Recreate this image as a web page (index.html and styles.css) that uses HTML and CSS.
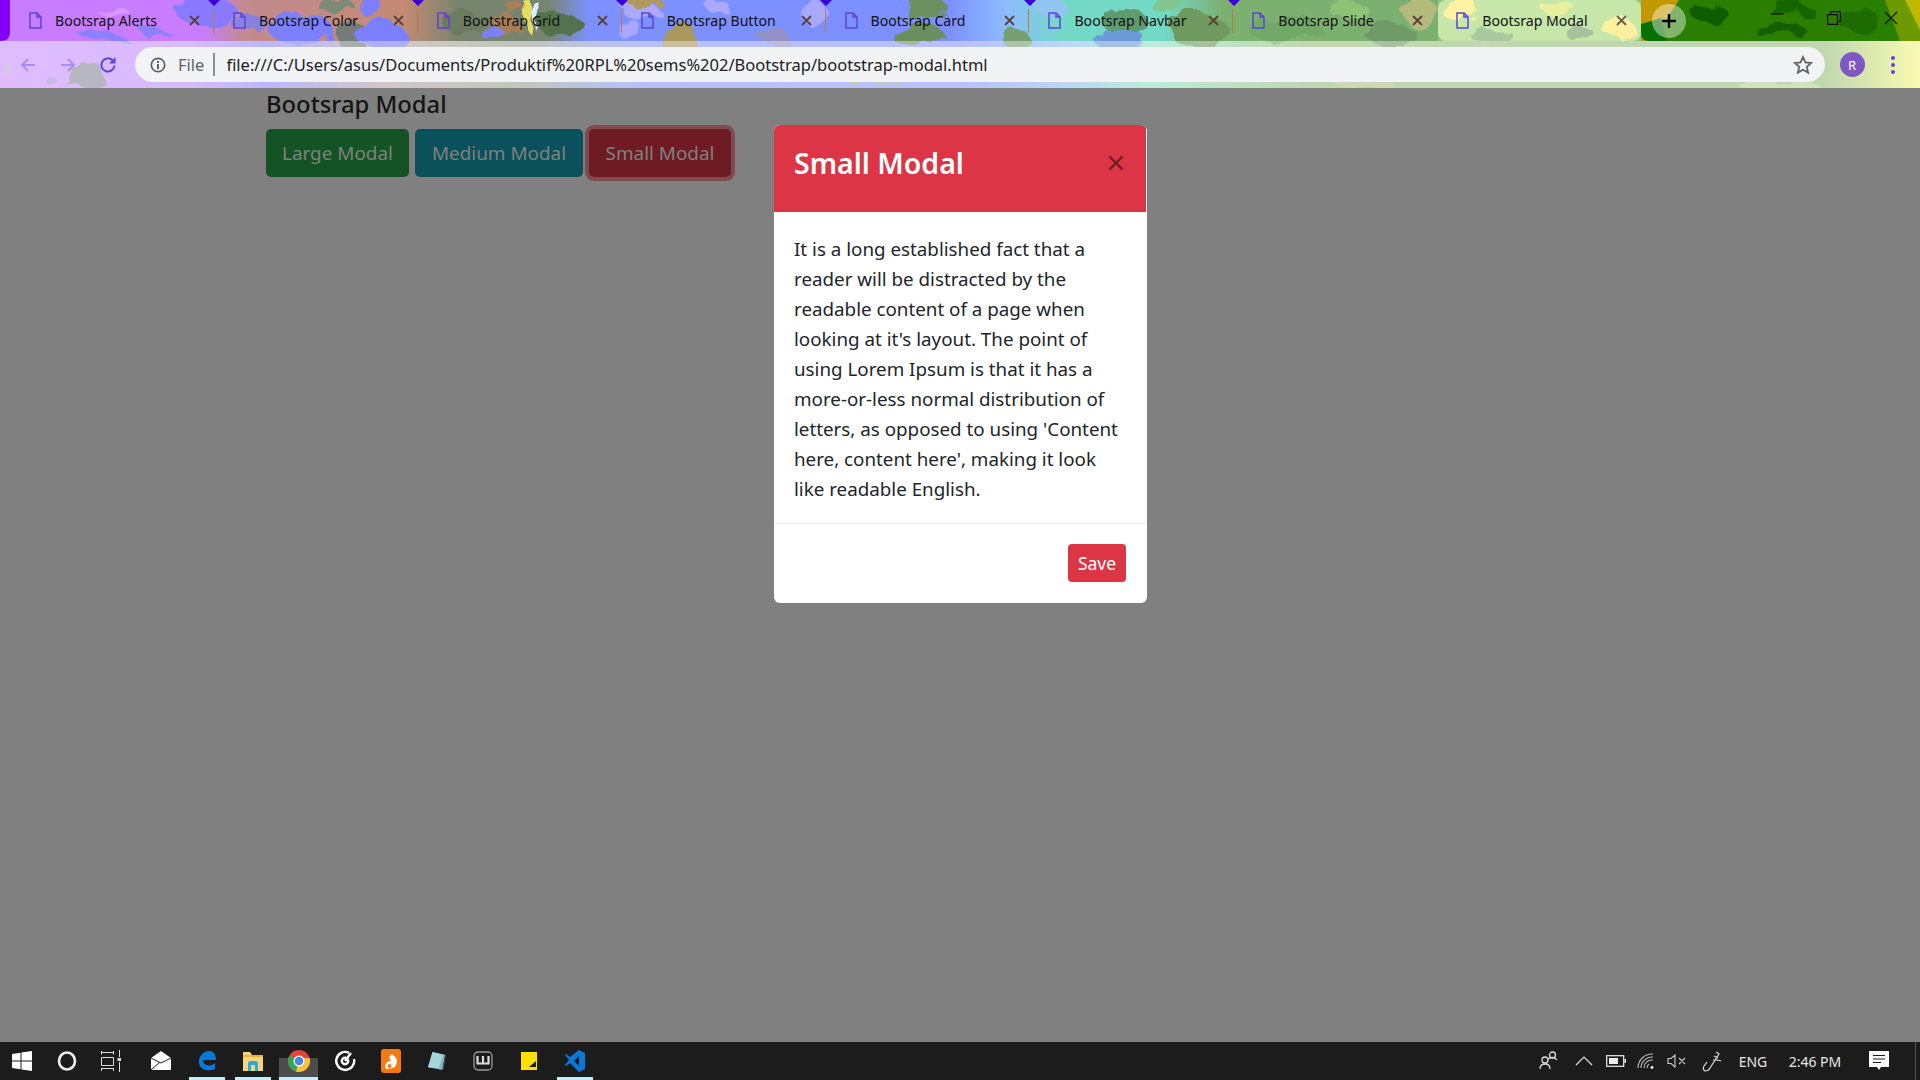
FILE: index.html
```html
<!DOCTYPE html>
<html lang="en">
<head>
<meta charset="utf-8">
<title>Bootstrap Modal</title>
<link rel="stylesheet" href="styles.css">
</head>
<body>
<svg width="0" height="0" class="defs">
  <symbol id="doc" viewBox="0 0 13 17"><path d="M1 1h7l4 4v11H1z M8 1v4h4" fill="none" stroke="#5b44d6" stroke-width="1.500"/></symbol>
  <symbol id="x" viewBox="0 0 11 11"><path d="M1 1l9 9M10 1l-9 9" fill="none" stroke="currentColor" stroke-width="1.800"/></symbol>
</svg>
<header class="chrome">
  <svg class="wallpaper" viewBox="0 0 1920 88" preserveAspectRatio="none">
    <defs>
      <linearGradient id="topband" x1="0" x2="1438" y1="0" y2="0" gradientUnits="userSpaceOnUse">
        <stop offset="0" stop-color="#c87cff"/>
        <stop offset=".14" stop-color="#c87cff"/>
        <stop offset=".17" stop-color="#c38a90"/>
        <stop offset=".28" stop-color="#c48a74"/>
        <stop offset=".32" stop-color="#77846e"/>
        <stop offset=".38" stop-color="#77846e"/>
        <stop offset=".41" stop-color="#7c90ff"/>
        <stop offset=".66" stop-color="#7c90ff"/>
        <stop offset=".70" stop-color="#8ebcff"/>
        <stop offset=".74" stop-color="#74d8c6"/>
        <stop offset=".81" stop-color="#74d8c6"/>
        <stop offset=".85" stop-color="#7cb070"/>
        <stop offset="1" stop-color="#7cb070"/>
      </linearGradient>
      <linearGradient id="lowband" x1="0" x2="1920" y1="0" y2="0" gradientUnits="userSpaceOnUse">
        <stop offset="0" stop-color="#cd93ff"/>
        <stop offset=".10" stop-color="#c090ff"/>
        <stop offset=".14" stop-color="#8f8cff"/>
        <stop offset=".20" stop-color="#b8a4a8"/>
        <stop offset=".27" stop-color="#9aa590"/>
        <stop offset=".33" stop-color="#8c9aff"/>
        <stop offset=".50" stop-color="#8e9aff"/>
        <stop offset=".56" stop-color="#8cc4f0"/>
        <stop offset=".60" stop-color="#8ce4c2"/>
        <stop offset=".68" stop-color="#99c07f"/>
        <stop offset=".95" stop-color="#99c07f"/>
        <stop offset="1" stop-color="#f6f880"/>
      </linearGradient>
      <filter id="rough" x="0" y="0" width="1920" height="88" filterUnits="userSpaceOnUse">
        <feTurbulence type="fractalNoise" baseFrequency=".035" numOctaves="3" seed="7"/>
        <feDisplacementMap in="SourceGraphic" scale="22"/>
      </filter>
    </defs>
    <rect width="1920" height="88" fill="url(#lowband)"/>
    <rect width="1438" height="41" fill="url(#topband)"/>
    <g filter="url(#rough)">
      <path d="M75 33q30-8 55 8H110q-20-2-35-8zM130 20q30 10 50 21h-30z" fill="#8d80ff"/>
      <ellipse cx="205" cy="10" rx="30" ry="14" fill="#8a7aff"/>
      <ellipse cx="110" cy="8" rx="16" ry="4" fill="#d898ff"/>
      <path d="M70 88l8-18q14-8 24-2l8 20z" fill="#8b8b9b"/>
      <ellipse cx="50" cy="80" rx="6" ry="4" fill="#a78fd8"/>
      <ellipse cx="8" cy="70" rx="5" ry="8" fill="#b8a8d8"/>
      <ellipse cx="300" cy="28" rx="32" ry="16" fill="#7c80ff"/>
      <ellipse cx="248" cy="22" rx="18" ry="10" fill="#8a80e0"/>
      <ellipse cx="335" cy="5" rx="18" ry="7" fill="#7c8a78"/>
      <ellipse cx="352" cy="36" rx="18" ry="14" fill="#737c78"/>
      <ellipse cx="380" cy="34" rx="26" ry="12" fill="#7c80ff"/>
      <ellipse cx="370" cy="6" rx="12" ry="10" fill="#7c80ff"/>
      <ellipse cx="465" cy="22" rx="24" ry="12" fill="#6c7c60"/>
      <path d="M490 18l20-6 12 18-16 10zM505 4l14-4 6 8-12 6z" fill="#a97e56"/>
      <path d="M524 2l6-2 6 16-4 20-6-8z" fill="#e6dd5c"/>
      <path d="M534 4l5-2 4 18-6 12z" fill="#d8f0ff"/>
      <ellipse cx="562" cy="26" rx="22" ry="12" fill="#52724e"/>
      <ellipse cx="495" cy="36" rx="12" ry="6" fill="#7c80ff"/>
      <ellipse cx="640" cy="10" rx="18" ry="9" fill="#aca8ff"/>
      <ellipse cx="630" cy="30" rx="12" ry="10" fill="#a8a6ff"/>
      <ellipse cx="640" cy="0" rx="20" ry="5" fill="#b09a60"/>
      <ellipse cx="678" cy="38" rx="18" ry="18" fill="#a89860"/>
      <ellipse cx="715" cy="4" rx="12" ry="5" fill="#aaa8ff"/>
      <ellipse cx="775" cy="38" rx="14" ry="10" fill="#9490c8"/>
      <ellipse cx="815" cy="14" rx="10" ry="14" fill="#a8a8ff"/>
      <ellipse cx="925" cy="8" rx="22" ry="12" fill="#6c9060"/>
      <ellipse cx="918" cy="36" rx="26" ry="12" fill="#6c8f60"/>
      <ellipse cx="1015" cy="38" rx="14" ry="10" fill="#76a070"/>
      <ellipse cx="1048" cy="5" rx="16" ry="8" fill="#92c4f0"/>
      <ellipse cx="1125" cy="22" rx="22" ry="14" fill="#5f9a70"/>
      <ellipse cx="1120" cy="40" rx="26" ry="10" fill="#6c9ad8"/>
      <ellipse cx="1200" cy="32" rx="30" ry="16" fill="#6e9a5e"/>
      <ellipse cx="1170" cy="4" rx="20" ry="8" fill="#80c890"/>
      <ellipse cx="1285" cy="30" rx="36" ry="14" fill="#72a868"/>
      <ellipse cx="1390" cy="34" rx="26" ry="10" fill="#6f9a68"/>
      <ellipse cx="1420" cy="12" rx="16" ry="16" fill="#b4ba7c"/>
      <ellipse cx="1345" cy="6" rx="20" ry="8" fill="#8ec274"/>
      <ellipse cx="620" cy="78" rx="22" ry="6" fill="#a0a8b0"/>
      <ellipse cx="870" cy="78" rx="24" ry="8" fill="#a0aa90"/>
      <ellipse cx="1360" cy="80" rx="34" ry="8" fill="#b4c080"/>
      <ellipse cx="1780" cy="86" rx="40" ry="6" fill="#b4d48c"/>
    </g>
    <rect x="1438" width="203" height="41" rx="8" fill="#c6e6aa"/>
    <g filter="url(#rough)">
      <ellipse cx="1460" cy="10" rx="18" ry="12" fill="#fff2a0"/>
      <ellipse cx="1490" cy="34" rx="22" ry="6" fill="#a8c8a0"/>
      <ellipse cx="1560" cy="10" rx="16" ry="8" fill="#e8f0a0"/>
      <ellipse cx="1618" cy="28" rx="16" ry="10" fill="#fff0a0"/>
      <ellipse cx="1580" cy="34" rx="14" ry="7" fill="#a8c0a0"/>
    </g>
    <path d="M0 0H10V32q0 9-9 9H0z" fill="#8400fb"/>
    <path d="M1641 0H1920V41H1651q-10 0-10-10z" fill="#2a7e00"/>
    <path d="M1641 0h38l-12 18-18 23h-8z" fill="#c29800"/>
    <path d="M1641 24l20-6 6 23h-18q-8 0-8-8z" fill="#087000"/>
    <g filter="url(#rough)">
      <ellipse cx="1710" cy="14" rx="18" ry="10" fill="#0c5c00"/>
      <ellipse cx="1780" cy="30" rx="26" ry="7" fill="#125e00"/>
      <ellipse cx="1790" cy="8" rx="22" ry="6" fill="#146600"/>
      <ellipse cx="1860" cy="22" rx="22" ry="10" fill="#1c6c00"/>
    </g>
    <path d="M1885 0h35v41h-20z" fill="#6c9a00"/>
    <path d="M1905 0h15v30z" fill="#c0b800"/>
    <path d="M208 0h12l-6 6zM412 0h12l-6 6zM616 0h12l-6 6zM820 0h12l-6 6zM1024 0h12l-6 6zM1228 0h12l-6 6z" fill="#3a00d8"/>
  </svg>
  <div class="tabstrip">
    <div class="tab"><svg class="tab-doc"><use href="#doc"/></svg><span class="tab-title">Bootsrap Alerts</span><svg class="tab-x"><use href="#x"/></svg></div>
    <div class="tab"><svg class="tab-doc"><use href="#doc"/></svg><span class="tab-title">Bootsrap Color</span><svg class="tab-x"><use href="#x"/></svg></div>
    <div class="tab"><svg class="tab-doc"><use href="#doc"/></svg><span class="tab-title">Bootstrap Grid</span><svg class="tab-x"><use href="#x"/></svg></div>
    <div class="tab"><svg class="tab-doc"><use href="#doc"/></svg><span class="tab-title">Bootsrap Button</span><svg class="tab-x"><use href="#x"/></svg></div>
    <div class="tab"><svg class="tab-doc"><use href="#doc"/></svg><span class="tab-title">Bootsrap Card</span><svg class="tab-x"><use href="#x"/></svg></div>
    <div class="tab"><svg class="tab-doc"><use href="#doc"/></svg><span class="tab-title">Bootsrap Navbar</span><svg class="tab-x"><use href="#x"/></svg></div>
    <div class="tab tab-plain"><svg class="tab-doc"><use href="#doc"/></svg><span class="tab-title">Bootsrap Slide</span><svg class="tab-x"><use href="#x"/></svg></div>
    <div class="tab tab-plain"><svg class="tab-doc"><use href="#doc"/></svg><span class="tab-title">Bootsrap Modal</span><svg class="tab-x tab-x-active"><use href="#x"/></svg></div>
    <div class="newtab"><svg width="16" height="16" viewBox="0 0 16 16"><path d="M8 1v14M1 8h14" stroke="#000" stroke-width="2.400"/></svg></div>
    <div class="winctl">
      <div class="winbtn"><svg width="14" height="14" viewBox="0 0 14 14"><path d="M0 3h13" stroke="#111" stroke-width="1.200"/></svg></div>
      <div class="winbtn"><svg width="14" height="14" viewBox="0 0 14 14"><path d="M.6 3.600h9.800v9.800H.6zM3.600 3.400V.6h9.800v9.800h-2.800" fill="none" stroke="#111" stroke-width="1.200"/></svg></div>
      <div class="winbtn"><svg width="14" height="14" viewBox="0 0 14 14"><path d="M1 1l12 12M13 1L1 13" stroke="#111" stroke-width="1.200"/></svg></div>
    </div>
  </div>
  <div class="toolbar">
    <div class="navbtn nav-off"><svg width="18" height="18" viewBox="0 0 18 18"><path d="M16 9H3M9 3L3 9l6 6" fill="none" stroke="currentColor" stroke-width="1.800"/></svg></div>
    <div class="navbtn nav-off"><svg width="18" height="18" viewBox="0 0 18 18"><path d="M2 9h13M9 3l6 6-6 6" fill="none" stroke="currentColor" stroke-width="1.800"/></svg></div>
    <div class="navbtn"><svg width="18" height="18" viewBox="0 0 18 18"><path d="M15.500 9.500a6.600 6.600 0 1 1-1.900-5.200" fill="none" stroke="currentColor" stroke-width="2"/><path d="M16.500 1v6.500h-6.500z" fill="currentColor"/></svg></div>
    <div class="omnibox">
      <svg class="info" width="16" height="16" viewBox="0 0 16 16"><circle cx="8" cy="8" r="6.700" fill="none" stroke="#5f6368" stroke-width="1.700"/><path d="M7 7h2v5H7zM7 4h2v2H7z" fill="#5f6368"/></svg>
      <span class="scheme">File</span>
      <span class="url">file:///C:/Users/asus/Documents/Produktif%20RPL%20sems%202/Bootstrap/bootstrap-modal.html</span>
      <svg class="star" width="20" height="20" viewBox="0 0 20 20"><path d="M10 2l2.400 5.400 5.800.6-4.400 3.900 1.300 5.700L10 14.700l-5.100 2.900 1.300-5.700L1.800 8l5.800-.6z" fill="none" stroke="#5f6368" stroke-width="1.800"/></svg>
    </div>
    <div class="avatar-slot"><span class="avatar">R</span></div>
    <div class="menu-slot"><span class="dots"><i></i><i></i><i></i></span></div>
  </div>
</header>

<main class="page">
  <h5 class="page-title">Bootsrap Modal</h5>
  <div class="btn-row">
    <button class="btn btn-green">Large Modal</button>
    <button class="btn btn-teal">Medium Modal</button>
    <button class="btn btn-red">Small Modal</button>
  </div>
  <section class="modal">
    <div class="modal-head">
      <h4 class="modal-title">Small Modal</h4>
      <svg class="modal-x" width="16" height="16" viewBox="0 0 16 16"><path d="M1.500 1.500l13 13M14.500 1.500l-13 13" stroke="#6e1c25" stroke-width="2.300"/></svg>
    </div>
    <div class="modal-body">It is a long established fact that a reader will be distracted by the readable content of a page when looking at it's layout. The point of using Lorem Ipsum is that it has a more-or-less normal distribution of letters, as opposed to using 'Content here, content here', making it look like readable English.</div>
    <div class="modal-foot"><button class="btn-save">Save</button></div>
  </section>
</main>

<footer class="taskbar">
  <div class="sys-icons">
    <div class="tb-sys"><svg width="20" height="20" viewBox="0 0 20 20"><path d="M0 3l8.500-1.200V9.500H0zM9.500 1.600L20 0v9.500H9.500zM0 10.500h8.500v7.700L0 17zM9.500 10.500H20V20L9.500 18.400z" fill="#fff"/></svg></div>
    <div class="tb-sys"><svg width="20" height="20" viewBox="0 0 20 20"><ellipse cx="10" cy="10" rx="8" ry="8.500" fill="none" stroke="#eee" stroke-width="2.600"/></svg></div>
    <div class="tb-sys"><svg width="22" height="22" viewBox="0 0 22 22" fill="none" stroke="#ddd" stroke-width="1"><path d="M.5 2.500h12M.5 4.500V1M12.500 4.500V1M.5 7.500h12v8H.5zM.5 18.500h12M.5 21v-3M12.500 21v-3M18.500 0v7M18.500 12v10"/><rect x="16.500" y="8" width="3.500" height="3" fill="#ddd" stroke="none"/></svg></div>
  </div>
  <div class="apps">
    <div class="tb-app"><svg width="20" height="20" viewBox="0 0 20 20"><path d="M0 7L10 0l10 7v12H0z" fill="#fff"/><path d="M0 7l10 5 10-5M0 19l9-8" fill="none" stroke="#1c1c1c" stroke-width="1"/></svg></div>
    <div class="tb-app tb-open"><svg width="20" height="24" viewBox="0 0 20 24"><path d="M2 13C2 6 7 2 12 2c5 0 7 4 7 9H6c0 6 8 7 12 3v6c-7 3-16 1-16-7z" fill="#0a78d7"/></svg><i class="tb-line"></i></div>
    <div class="tb-app tb-open"><svg width="22" height="22" viewBox="0 0 22 22"><path d="M1 2h7l2 3h11v16H1z" fill="#f5d67a"/><path d="M1 6h20" stroke="#e0a93a" stroke-width="1.500"/><path d="M6 21v-7q0-3 3-3h4q3 0 3 3v7h-3v-6H9v6z" fill="#2aa9e6"/></svg><i class="tb-line"></i></div>
    <div class="tb-app tb-open tb-active"><svg width="24" height="24" viewBox="0 0 24 24" class="tb-over"><circle cx="12" cy="12" r="11" fill="#e0453a"/><path d="M12 12L2.500 6.500A11 11 0 0 0 9 22.600z" fill="#34a853"/><path d="M12 12l-3 10.600A11 11 0 0 0 22.600 9H12z" fill="#f9c23c"/><circle cx="12" cy="12" r="5.500" fill="#fff"/><circle cx="12" cy="12" r="4.300" fill="#4a86e8"/></svg><i class="tb-line"></i></div>
    <div class="tb-app"><svg width="22" height="22" viewBox="0 0 22 22" fill="none" stroke="#fff" stroke-width="2.400"><path d="M15 2.800A9 9 0 1 0 20 9"/><circle cx="11" cy="11" r="3.200"/><path d="M11 11l6-8"/></svg></div>
    <div class="tb-app"><svg width="22" height="24" viewBox="0 0 22 24"><rect x="1" y="0" width="20" height="24" rx="3" fill="#f57a10"/><path d="M6 20c-2-5 1-8 5-8l-2-4 3-3 4 4c2 4 0 9-3 10z" fill="#fff"/><circle cx="9.500" cy="17" r="2" fill="#f57a10"/></svg></div>
    <div class="tb-app"><svg width="18" height="20" viewBox="0 0 20 22"><path d="M5 1l14 3-3 17L0 18z" fill="#7fb4be"/><path d="M5 1l12 3-5 15-12-1z" fill="#a8d4dc"/><path d="M16 21l3-17 1 1-3 16z" fill="#5a5140"/></svg></div>
    <div class="tb-app"><svg width="20" height="20" viewBox="0 0 20 20" fill="none" stroke="#ddd"><rect x="1" y="1" width="18" height="18" rx="4" stroke-width="1.300" stroke="#999"/><path d="M4.500 5v7.500h11V5M10 5v7.500" stroke-width="2.200"/></svg></div>
    <div class="tb-app"><svg width="16" height="18" viewBox="0 0 16 18"><path d="M0 0h16v18H0z" fill="#ffe000"/><path d="M8 15l7-6v6z" fill="#222"/></svg></div>
    <div class="tb-app tb-open"><svg width="20" height="24" viewBox="0 0 20 24"><path d="M14 1l6 3v16l-6 3-9-9-4 3-1-1 4-5-4-5 1-1 4 3zM14 7l-5 5 5 5z" fill="#0a78d7"/></svg><i class="tb-line"></i></div>
  </div>
  <div class="tray">
    <div class="tray-slot"><svg width="20" height="20" viewBox="0 0 20 20" fill="none" stroke="#ddd" stroke-width="1.300"><circle cx="13.500" cy="4" r="3"/><circle cx="6" cy="9" r="3"/><path d="M1 18c0-3 2-5 5-5s5 2 5 5M9 8c1-1 3-1.500 5-1.500 2 0 3 1 4 2.500"/></svg></div>
    <div class="tray-slot"><svg width="18" height="10" viewBox="0 0 18 10"><path d="M1 9l8-8 8 8" fill="none" stroke="#ddd" stroke-width="1.200"/></svg></div>
    <div class="tray-slot"><svg width="20" height="12" viewBox="0 0 20 12"><rect x=".7" y=".7" width="17" height="10.600" fill="none" stroke="#eee" stroke-width="1.200"/><rect x="3" y="3" width="9" height="6" fill="#eee"/><rect x="18.500" y="4" width="1.500" height="4" fill="#eee"/></svg></div>
    <div class="tray-slot"><svg width="18" height="16" viewBox="0 0 18 16" fill="none" stroke="#bbb" stroke-width="1.100"><path d="M1 15A14 14 0 0 1 16 1M4 15A11 11 0 0 1 16 4M7 15A8 8 0 0 1 16 7M10 15a5 5 0 0 1 2-4"/><circle cx="15" cy="14.500" r="1.400" fill="#eee" stroke="none"/></svg></div>
    <div class="tray-slot"><svg width="20" height="14" viewBox="0 0 20 14" fill="none" stroke="#ccc" stroke-width="1.100"><path d="M1 4.500h3L8 1v12L4 9.500H1zM12 4l6 6M18 4l-6 6"/></svg></div>
    <div class="tray-slot"><svg width="21" height="21" viewBox="0 0 21 21" fill="none" stroke="#ddd" stroke-width="1.200"><path d="M15 1l3 2-9 14c-1 2-3 3-5 3-2-1-2-3-1-5l3-4M13 5l4 2M12 9c3 0 7 0 8 1"/></svg></div>
    <div class="tray-slot tray-text">ENG</div>
    <div class="tray-slot tray-text">2:46 PM</div>
    <div class="tray-slot"><svg width="20" height="20" viewBox="0 0 20 20"><path d="M0 0h20v16h-8l-2 3-2-3H0z" fill="#fff"/><path d="M4 4.500h12M4 8h12M4 11.500h8" stroke="#1c1c1c" stroke-width="1"/></svg></div>
    <div class="tray-edge"></div>
  </div>
</footer>
</body>
</html>
```

FILE: styles.css
```css
* { box-sizing: border-box; }
html, body { margin: 0; height: 100%; }
body {
  display: flex;
  flex-direction: column;
  height: 100vh;
  overflow: hidden;
  font-family: "Noto Sans", "Open Sans", sans-serif;
  background: #808080;
}
.defs { position: absolute; }

/* browser chrome */
.chrome { position: relative; height: 88px; flex: none; overflow: hidden; }
.wallpaper { position: absolute; inset: 0; width: 100%; height: 100%; }
.tabstrip {
  position: relative;
  display: flex;
  height: 41px;
  padding-left: 10px;
  align-items: stretch;
}
.tab {
  position: relative;
  width: 203.9px;
  flex: none;
  display: flex;
  align-items: center;
  padding: 0 14px 0 19px;
  font-size: 14.100px;
  color: #111;
}
.tab::after {
  content: "";
  position: absolute;
  right: 0;
  top: 9px;
  bottom: 8px;
  width: 1px;
  background: #b87c48;
}
.tab-plain::after { display: none; }
.tab-doc { width: 13px; height: 17px; flex: none; margin-right: 13px; }
.tab-title { white-space: nowrap; }
.tab-x { width: 11px; height: 11px; margin-left: auto; color: #5a4038; flex: none; }
.tab-x-active { color: #5f5f5f; }
.newtab {
  width: 34px;
  height: 34px;
  margin: 4px 0 0 11px;
  border-radius: 50%;
  background: rgba(255, 255, 255, .42);
  display: flex;
  align-items: center;
  justify-content: center;
  flex: none;
}
.winctl { margin-left: auto; display: flex; }
.winbtn { width: 56px; height: 36px; display: flex; align-items: center; justify-content: center; }
.winbtn:last-child { width: 58px; }

.toolbar {
  position: relative;
  height: 47px;
  display: flex;
  align-items: center;
  padding: 0 13px 0 8px;
  background: rgba(255, 255, 255, .38);
}
.navbtn { width: 40px; display: flex; justify-content: center; color: #5b44d6; flex: none; }
.nav-off { color: #a88cf0; }
.omnibox {
  flex: 1;
  margin-left: 7px;
  height: 35px;
  border-radius: 18px;
  background: #f1f3f4;
  display: flex;
  align-items: center;
  padding: 0 12px 0 15px;
  font-size: 16.500px;
}
.scheme {
  margin-left: 12px;
  padding-right: 9px;
  border-right: 2px solid #8a8d91;
  line-height: 23px;
  color: #5f6368;
}
.url { margin-left: 11px; color: #202124; white-space: nowrap; }
.star { margin-left: auto; }
.avatar-slot { width: 54px; display: flex; justify-content: center; flex: none; }
.avatar {
  width: 25px;
  height: 25px;
  border-radius: 50%;
  background: #7e57c2;
  color: #fff;
  font-size: 13px;
  display: flex;
  align-items: center;
  justify-content: center;
}
.menu-slot { width: 28px; display: flex; justify-content: center; flex: none; }
.dots { display: flex; flex-direction: column; gap: 3px; }
.dots i { width: 4px; height: 4px; border-radius: 50%; background: #5b44d6; }

/* page */
.page { position: relative; flex: 1; background: #808080; padding: 0 0 0 266px; }
.page-title {
  margin: 0 0 8px;
  font-size: 23.800px;
  font-weight: 500;
  line-height: 33px;
  color: #141414;
}
.btn-row { display: flex; gap: 6px; }
.btn {
  height: 48px;
  border: 0;
  border-radius: 5px;
  padding: 0 16px;
  font: inherit;
  font-size: 18.900px;
  color: #808080;
}
.btn-green { background: #145323; width: 143px; }
.btn-teal { background: #0b515c; width: 168px; }
.btn-red { background: #6e1b23; width: 142px; box-shadow: 0 0 0 4px #7f4a50; }

.modal {
  position: absolute;
  left: 774px;
  top: 37px;
  width: 373px;
  height: 478px;
  background: #fff;
  border-radius: 6px;
  overflow: hidden;
  display: flex;
  flex-direction: column;
}
.modal-head {
  height: 87px;
  flex: none;
  margin-right: 1px;
  padding: 0 22px 0 20px;
  background: #dc3545;
  display: flex;
  align-items: flex-start;
  justify-content: space-between;
}
.modal-title {
  margin: 0;
  padding-top: 20px;
  font-size: 28.500px;
  font-weight: 600;
  line-height: 36px;
  color: #fff;
}
.modal-x { margin-top: 30px; }
.modal-body {
  flex: none;
  padding: 22px 20px 19px;
  font-size: 18.800px;
  line-height: 30px;
  color: #212529;
}
.modal-foot {
  flex: 1;
  border-top: 1px solid #e9ecef;
  padding: 20px 21px 0 0;
  display: flex;
  justify-content: flex-end;
  align-items: flex-start;
}
.btn-save {
  width: 58px;
  height: 38px;
  border: 0;
  border-radius: 4px;
  background: #dc3545;
  color: #fff;
  font: inherit;
  font-size: 17.500px;
}

/* taskbar */
.taskbar {
  height: 38px;
  flex: none;
  background: #1c1c1c;
  display: flex;
  align-items: stretch;
  color: #e6e6e6;
}
.sys-icons { display: grid; grid-template-columns: 44px 45px 45px; width: 138px; }
.tb-sys, .tb-app, .tray-slot { display: flex; align-items: center; justify-content: center; position: relative; }
.apps { display: flex; }
.tb-app { width: 46px; }
.tb-line {
  position: absolute;
  left: 5px;
  right: 5px;
  bottom: 0;
  height: 3px;
  background: #c6eeff;
}
.tb-active::before {
  content: "";
  position: absolute;
  left: 3px;
  right: 4px;
  top: 16px;
  bottom: 0;
  background: #4c4c4c;
}
.tb-active .tb-line { left: 3px; right: 4px; }
.tb-over { position: relative; }
.tray {
  margin-left: auto;
  width: 390px;
  display: grid;
  grid-template-columns: 37px 34px 30px 30px 32px 36px 48px 76px 52px 15px;
}
.tray-text { font-size: 14px; white-space: nowrap; }
.tray-edge { border-right: 1px solid #555; width: 11px; }
```
